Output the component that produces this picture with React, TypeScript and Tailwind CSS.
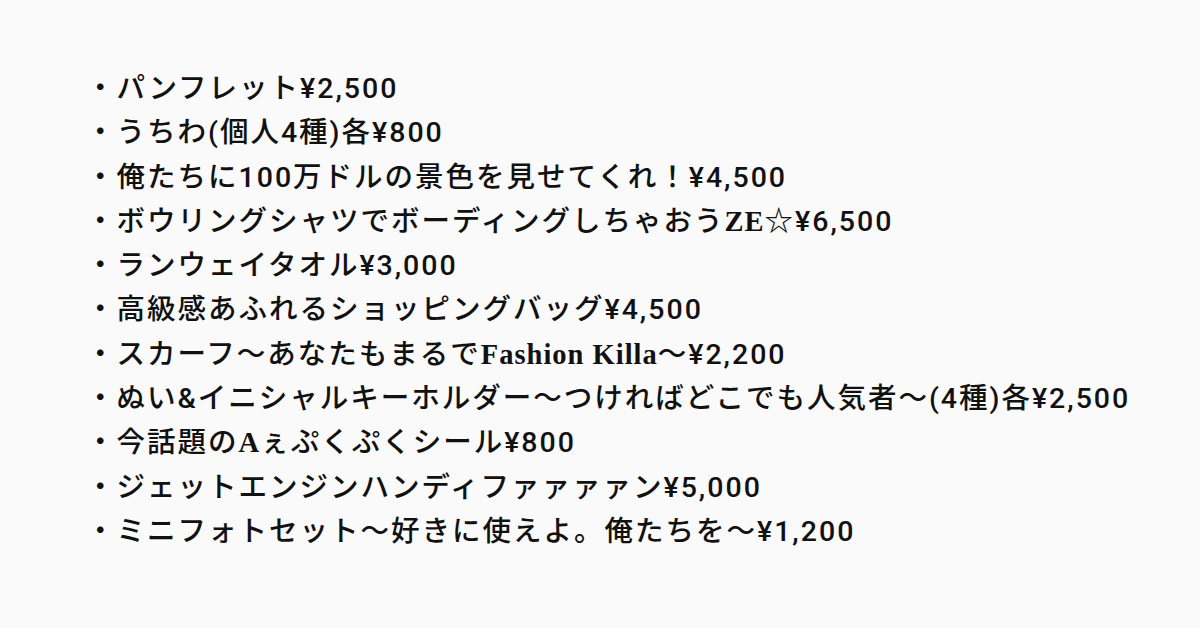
const items = [
  "パンフレット¥2,500",
  "うちわ(個人4種)各¥800",
  "俺たちに100万ドルの景色を見せてくれ！¥4,500",
  "ボウリングシャツでボーディングしちゃおうZE☆¥6,500",
  "ランウェイタオル¥3,000",
  "高級感あふれるショッピングバッグ¥4,500",
  "スカーフ～あなたもまるでFashion Killa～¥2,200",
  "ぬい&イニシャルキーホルダー～つければどこでも人気者～(4種)各¥2,500",
  "今話題のAぇぷくぷくシール¥800",
  "ジェットエンジンハンディファァァァン¥5,000",
  "ミニフォトセット～好きに使えよ。俺たちを～¥1,200",
];

// latin words are set in a serif face in the original
function Line({ text }: { text: string }) {
  const parts = text.split(/([A-Za-z]+(?: [A-Za-z]+)*)/);
  return (
    <>
      {parts.map((p, i) =>
        i % 2 === 1 ? (
          <span key={i} className="font-['Liberation_Serif',serif] font-bold tracking-[1px]">
            {p}
          </span>
        ) : (
          <span key={i}>{p}</span>
        )
      )}
    </>
  );
}

export default function App() {
  return (
    <main className="w-[1200px] h-[628px] bg-[#fafafa] pt-[67px] pl-[86px] font-['Roboto','Noto_Sans_CJK_JP',sans-serif] text-[#111]">
      <ul className="flex flex-col">
        {items.map((t) => (
          <li key={t} className="text-[28.5px] leading-[44.3px] font-medium tracking-[2px] whitespace-nowrap">
            ・<Line text={t} />
          </li>
        ))}
      </ul>
    </main>
  );
}
